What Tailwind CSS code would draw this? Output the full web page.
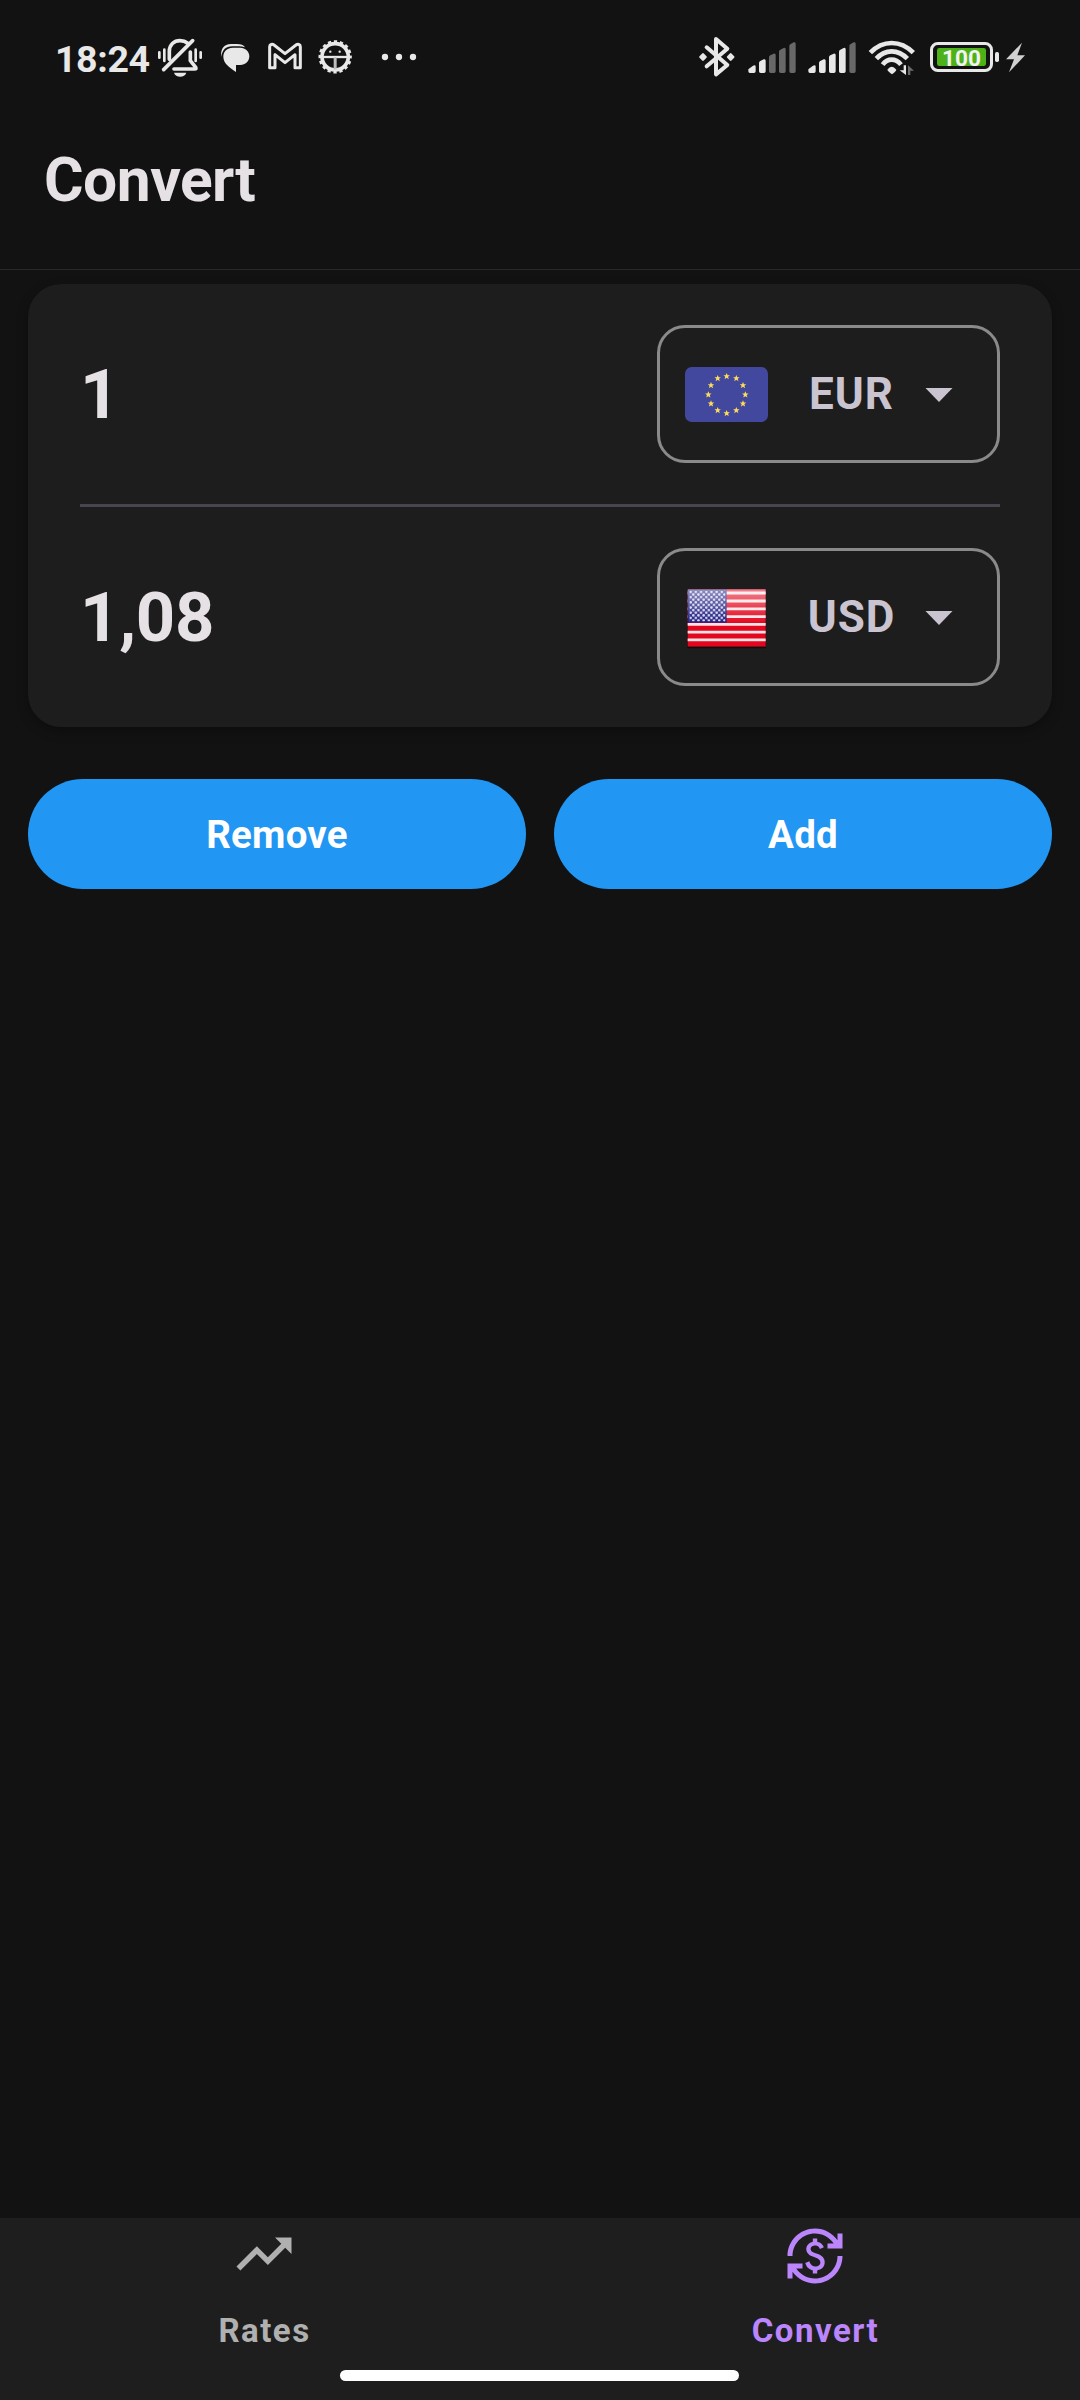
<!DOCTYPE html>
<html lang="en">
<head>
<meta charset="utf-8">
<title>Convert</title>
<script src="https://cdn.jsdelivr.net/npm/@tailwindcss/browser@4"></script>
</head>
<body class="bg-[#121212]">
<div class="flex h-[2400px] w-[1080px] flex-col overflow-hidden bg-[#121212] font-['Roboto',sans-serif] font-bold text-[#e6e1e5]">

  <!-- Status bar -->
  <div class="flex h-[100px] items-start justify-between pt-5 pr-[54px] pl-[55px] text-[#e8e8e8]">
    <div class="flex">
      <span class="w-[101px] pt-[15px] text-[37.5px] leading-[48px] tracking-[-0.4px] whitespace-nowrap">18:24</span>
      <svg class="h-20 w-[49px]" viewBox="348 0 147 240" fill="none" stroke="currentColor" stroke-linecap="round" stroke-linejoin="round">
        <path d="M358 97v16M373 89v34M467 89v34M482 97v16" stroke-width="8"/>
        <path d="M388 118V94c0-20 14-32 32-32 9 0 16 2 22 7M451 96v26l16 20c2 4 1 5-3 5h-62" stroke-width="11"/>
        <path d="M371 149L458 62" stroke-width="11"/>
        <path d="M402 158h37c-4 16-33 16-37 0z" fill="currentColor" stroke="none"/>
      </svg>
      <svg class="ml-[14px] h-20 w-8" viewBox="27 0 96 240" fill="currentColor">
        <path d="M33 111c-1-24 8-39 30-39h18c12 0 20 3 24 10-6-2-12-3-18-3H67C47 79 38 89 33 111z"/>
        <path d="M68 83h23c15 0 27 11 27 26s-12 26-27 26H78v21C57 142 40 129 40 110c0-16 12-27 28-27z"/>
      </svg>
      <svg class="ml-4 h-20 w-9" viewBox="171 0 108 240" fill="none" stroke="currentColor" stroke-width="9" stroke-linejoin="round">
        <path d="M179 143V80c0-7 8-9 13-5l33 26 33-26c5-4 13-2 13 5v63h-16v-39l-30 24-30-24v39z"/>
      </svg>
      <svg class="ml-[14px] h-20 w-[37px]" viewBox="321 0 111 240" fill="none" stroke="currentColor">
        <circle cx="375.500" cy="110.500" r="39.500" stroke-width="11"/>
        <circle cx="375.500" cy="110.500" r="46" stroke-width="8" pathLength="160" stroke-dasharray="5.500 4.500" stroke-dashoffset="2.750"/>
        <path d="M337 111h77" stroke-width="7"/><path d="M375.500 112v36" stroke-width="9" stroke="#bdbdbd"/>
        <circle cx="361" cy="95" r="3.500" fill="currentColor" stroke="none"/><circle cx="389" cy="95" r="3.500" fill="currentColor" stroke="none"/>
      </svg>
      <svg class="ml-[26px] h-20 w-[38px]" viewBox="510 0 114 240" fill="currentColor">
        <circle cx="525" cy="111" r="9.500"/><circle cx="567" cy="111" r="9.500"/><circle cx="609" cy="111" r="9.500"/>
      </svg>
    </div>
    <div class="flex">
      <svg class="h-20 w-10" viewBox="51 0 120 240" fill="none" stroke="currentColor" stroke-width="12" stroke-linecap="round" stroke-linejoin="round">
        <path d="M80 82l62 53-34 28V57l34 29-62 53"/>
        <path d="M69 103l8 8-8 8-8-8zM152 103l8 8-8 8-8-8z" fill="currentColor" stroke-width="7"/>
      </svg>
      <svg class="ml-[10px] h-20 w-[50px]" viewBox="201 0 150 240" fill="currentColor">
        <path d="M205 148l14-11q8-4 8 3v14q0 5-5 5h-12q-5 0-5-5zM237 129q0-4 4-6l10-5q6-2 6 4v32q0 5-5 5h-10q-5 0-5-5z"/>
        <path fill="#686868" d="M267 112q0-4 4-6l10-5q6-2 6 4v49q0 5-5 5h-10q-5 0-5-5zM297 95q0-4 4-6l10-5q6-2 6 4v66q0 5-5 5h-10q-5 0-5-5zM328 78q0-4 4-6l9-5q6-2 6 4v83q0 5-5 5h-9q-5 0-5-5z"/>
      </svg>
      <svg class="ml-[10px] h-20 w-[50px]" viewBox="381 0 150 240" fill="currentColor">
        <path d="M385 148l14-11q8-4 8 3v14q0 5-5 5h-12q-5 0-5-5zM417 129q0-4 4-6l10-5q6-2 6 4v32q0 5-5 5h-10q-5 0-5-5zM447 112q0-4 4-6l10-5q6-2 6 4v49q0 5-5 5h-10q-5 0-5-5zM477 95q0-4 4-6l10-5q6-2 6 4v66q0 5-5 5h-10q-5 0-5-5z"/>
        <path fill="#686868" d="M508 78q0-4 4-6l9-5q6-2 6 4v83q0 5-5 5h-9q-5 0-5-5z"/>
      </svg>
      <svg class="ml-[11px] h-20 w-12" viewBox="24 0 144 240" fill="none" stroke="currentColor" stroke-width="14">
        <path d="M31 98Q59 69 95 69T160 98M49 116Q69 94 95 94T142 116M68 134Q79 119 95 119T123 134"/>
        <path d="M82 149q13-17 27 0-1 5-13 14-12-9-14-14z" fill="currentColor" stroke="none"/>
        <path d="M138 136v29L119 151h12v-15z" fill="currentColor" stroke="none"/><path d="M144 165v-29l18 16h-11v13z" fill="#6c6c6c" stroke="none"/>
      </svg>
      <svg class="ml-[13px] h-20 w-[71px]" viewBox="207 0 213 240">
        <rect x="214.500" y="70.500" width="180" height="81" rx="19" fill="none" stroke="currentColor" stroke-width="9"/>
        <rect x="231" y="84" width="147" height="54" rx="7" fill="#4cb217"/>
        <rect x="405" y="96" width="12" height="30" rx="5" fill="currentColor"/>
        <text x="246" y="137" textLength="117" lengthAdjust="spacingAndGlyphs" font-size="68" fill="#f2f2f2">100</text>
      </svg>
      <svg class="ml-[5px] h-20 w-[21px]" viewBox="435 0 63 240" fill="#d0d0d0"><path d="M486 68L438 118h24l-15 39 48-51h-23z"/></svg>
    </div>
  </div>

  <!-- Title bar -->
  <header class="h-[170px] shrink-0 border-b border-[#292929] pt-[45px] pl-[44px]">
    <h1 class="text-[60.5px] leading-[72px] tracking-[-0.5px]">Convert</h1>
  </header>

  <main class="flex-1 px-7 pt-[14px]">
    <section class="rounded-[33px] bg-[#1d1d1d] px-[52px] py-[41px] shadow-[0_4px_12px_rgba(0,0,0,0.3)]">
      <div class="flex h-[138px] items-center justify-between">
        <span class="pt-[2px] text-[68.75px] leading-[80px]">1</span>
        <button class="flex h-[138px] w-[343px] items-center rounded-[28px] border-3 border-[#8a8a8a] pl-[25px] text-[#cac4d0]">
          <svg class="h-[55px] w-[83px]" viewBox="135 291 249 165">
            <defs><path id="star" fill="#ffdc5a" d="M0-10L2.800-3.200H9.800L4.200 1.300 6.200 8.600 0 4.400-6.200 8.600-4.200 1.300-9.800-3.200h7z"/></defs>
            <rect x="135" y="291" width="249" height="165" rx="20" fill="#42489d"/>
            <use href="#star" x="260" y="319"/><use href="#star" x="289" y="325"/><use href="#star" x="309" y="346"/><use href="#star" x="316" y="374"/><use href="#star" x="309" y="401"/><use href="#star" x="289" y="421"/><use href="#star" x="260" y="430"/><use href="#star" x="233" y="421"/><use href="#star" x="213" y="401"/><use href="#star" x="205" y="374"/><use href="#star" x="213" y="346"/><use href="#star" x="233" y="325"/>
          </svg>
          <span class="ml-[29px] w-[109px] text-center text-[44px] leading-[52px] tracking-[1px]">EUR</span>
          <svg class="mt-[2px] ml-[19px] h-[14px] w-7" viewBox="0 0 28 14" fill="currentColor"><path d="M0.500 0h27L14 14z"/></svg>
        </button>
      </div>
      <div class="my-[41px] h-[3px] bg-[#49454f]"></div>
      <div class="flex h-[138px] items-center justify-between">
        <span class="pt-[2px] text-[68.75px] leading-[80px] tracking-[-0.3px]">1,08</span>
        <button class="flex h-[138px] w-[343px] items-center rounded-[28px] border-3 border-[#8a8a8a] pl-[25px] text-[#cac4d0]">
          <svg class="mt-[2px] h-[63px] w-[83px]" viewBox="135 200 249 189">
            <defs>
              <linearGradient id="gloss" x1="0" y1="0" x2="0" y2="1"><stop offset="0" stop-color="#fff" stop-opacity=".5"/><stop offset=".6" stop-color="#fff" stop-opacity="0"/></linearGradient>
              <pattern id="stars" x="148" y="211" width="15.600" height="15.600" patternUnits="userSpaceOnUse"><circle cx="4" cy="4" r="3.800" fill="#dcdcf0"/><circle cx="11.800" cy="11.800" r="3.800" fill="#dcdcf0"/></pattern>
            </defs>
            <rect x="142" y="208" width="236" height="176" rx="3" fill="#0d0d0d"/>
            <rect x="143" y="206" width="234" height="174" rx="3" fill="#e2061f"/>
            <path d="M143 218h234M143 242h234M143 265.500h234M143 289h234M143 312h234M143 335.500h234M143 358.500h234" stroke="#fbe3e6" stroke-width="8.500"/>
            <rect x="143" y="206" width="117" height="101" fill="#1c1a80"/>
            <rect x="148" y="211" width="108" height="92" fill="url(#stars)"/>
            <rect x="143" y="206" width="234" height="174" rx="3" fill="url(#gloss)"/>
            <path d="M144 207.500h232" stroke="#a03048" stroke-width="2" opacity=".6"/><path d="M144 378.500h232" stroke="#8c0714" stroke-width="3"/>
          </svg>
          <span class="ml-[29px] w-[109px] text-center text-[44px] leading-[52px] tracking-[1px]">USD</span>
          <svg class="mt-[2px] ml-[19px] h-[14px] w-7" viewBox="0 0 28 14" fill="currentColor"><path d="M0.500 0h27L14 14z"/></svg>
        </button>
      </div>
    </section>

    <div class="mt-[52px] grid grid-cols-2 gap-7 text-[38.5px] leading-[46px] tracking-[0.2px] text-white">
      <button class="h-[110px] rounded-full bg-[#2196f3] pt-[2px]">Remove</button>
      <button class="h-[110px] rounded-full bg-[#2196f3] pt-[2px]">Add</button>
    </div>
  </main>

  <!-- Bottom navigation -->
  <nav class="relative flex h-[182px] shrink-0 justify-center bg-[#1e1e1e] text-[33px] leading-[40px] tracking-[1.5px]">
    <a class="flex w-[551px] shrink-0 flex-col items-center pt-[3px] text-[#b0b0b0]">
      <svg class="mr-[2px] h-[66px] w-[66px]" viewBox="0 0 24 24" fill="currentColor"><path d="M16 6l2.290 2.290-4.880 4.880-4-4L2 16.590 3.410 18l6-6 4 4 6.300-6.290L22 12V6z"/></svg>
      <span class="mt-[24px]">Rates</span>
    </a>
    <a class="flex w-[551px] shrink-0 flex-col items-center pt-[8px] text-[#bb86fc]">
      <svg class="mr-[2px] h-[60px] w-[60px]" viewBox="0 0 24 24" fill="currentColor"><path d="M12.890 11.100c-1.780-.59-2.640-.96-2.640-1.900 0-1.020 1.110-1.390 1.810-1.390 1.310 0 1.790.99 1.900 1.340l1.580-.67c-.15-.44-.82-1.910-2.660-2.230V5h-1.750v1.260c-2.600.56-2.620 2.850-2.620 2.960 0 2.270 2.250 2.910 3.350 3.310 1.580.56 2.280 1.070 2.280 2.030 0 1.130-1.050 1.610-1.980 1.610-1.820 0-2.340-1.870-2.400-2.090L8.100 14.750c.63 2.190 2.280 2.780 3.020 2.960V19h1.750v-1.240c.52-.09 3.020-.59 3.020-3.220.01-1.390-.6-2.610-3-3.440zM3 21H1v-6h6v2H4.520c1.610 2.410 4.360 4 7.480 4 4.970 0 9-4.030 9-9h2c0 6.080-4.920 11-11 11-3.720 0-7.010-1.850-9-4.670V21zM1 12C1 5.920 5.920 1 12 1c3.720 0 7.010 1.850 9 4.670V3h2v6h-6V7h2.480C17.870 4.590 15.120 3 12 3c-4.970 0-9 4.030-9 9H1z"/></svg>
      <span class="mt-[25px]">Convert</span>
    </a>
    <div class="absolute top-[152px] left-[340px] h-[11px] w-[399px] rounded-full bg-white"></div>
  </nav>
</div>
</body>
</html>
